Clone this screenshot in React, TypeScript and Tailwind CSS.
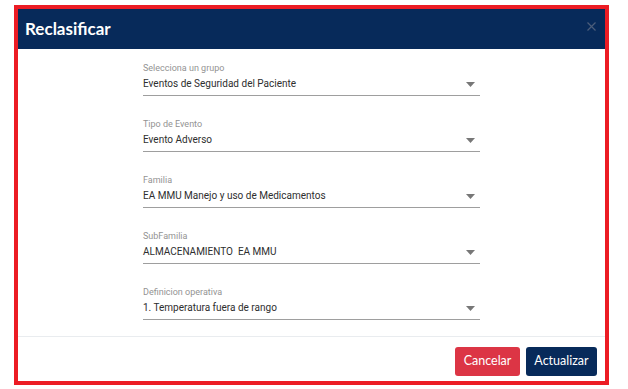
import React from "react";

const fields = [
  { label: "Selecciona un grupo", value: "Eventos de Seguridad del Paciente" },
  { label: "Tipo de Evento", value: "Evento Adverso" },
  { label: "Familia", value: "EA MMU Manejo y uso de Medicamentos" },
  { label: "SubFamilia", value: "ALMACENAMIENTO  EA MMU" },
  { label: "Definicion operativa", value: "1. Temperatura fuera de rango" },
];

function Field({ label, value }: { label: string; value: string }) {
  return (
    <div className="w-[337px] border-b border-[#9e9e9e] pb-[3px]" style={{ fontFamily: "Roboto, sans-serif" }}>
      <div className="h-[14px] text-[9px] leading-[12px] text-[#939393]">{label}</div>
      <div className="flex h-[16px] items-center justify-between">
        <span className="whitespace-pre text-[10px] leading-[16px] text-[#2e2e2e]">{value}</span>
        <svg width="9" height="5" viewBox="0 0 9 5" className="mr-[5px]">
          <path d="M0 0 L9 0 L4.5 5 Z" fill="#777" />
        </svg>
      </div>
    </div>
  );
}

export default function App() {
  return (
    <div className="h-[389px] w-[628px] bg-white pl-[14px] pt-[5px]">
      <div className="flex h-[380px] w-[595px] flex-col border-4 border-[#ec1c24] bg-white">
        <div className="flex h-[40px] items-center justify-between bg-[#072a5a] pl-[7px] pr-[9px]">
          <span className="text-[17px] font-bold text-white" style={{ fontFamily: "Lato, sans-serif" }}>
            Reclasificar
          </span>
          <svg width="9" height="9" viewBox="0 0 9 9" className="-mt-[6px]">
            <path d="M0.5 0.5 L8.5 8.5 M8.5 0.5 L0.5 8.5" stroke="#4b5d7a" strokeWidth="1.2" />
          </svg>
        </div>
        <div className="flex h-[288px] flex-col items-center gap-[22px] border-b border-[#e9ecef] pt-[13px]">
          {fields.map((f) => (
            <Field key={f.label} label={f.label} value={f.value} />
          ))}
        </div>
        <div className="flex flex-1 items-start justify-end gap-[6px] pr-[8px] pt-[10px]">
          <button
            className="h-[29px] w-[65px] rounded-[3px] bg-[#dc3545] text-[12.5px] text-white"
            style={{ fontFamily: "Lato, sans-serif" }}
          >
            Cancelar
          </button>
          <button
            className="h-[29px] w-[71px] rounded-[3px] bg-[#072a5a] text-[12.5px] text-white"
            style={{ fontFamily: "Lato, sans-serif" }}
          >
            Actualizar
          </button>
        </div>
      </div>
    </div>
  );
}
